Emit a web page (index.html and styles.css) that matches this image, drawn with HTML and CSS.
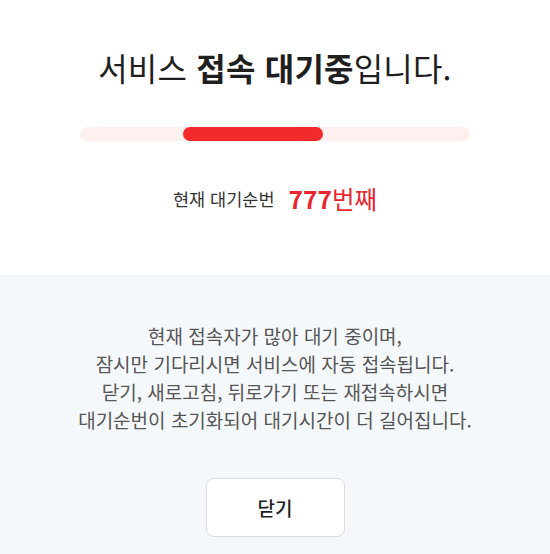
FILE: index.html
```html
<!DOCTYPE html>
<html lang="ko">
<head>
    <meta charset="UTF-8">
    <meta name="viewport" content="width=device-width, initial-scale=1.0">
    <title>서비스 접속 대기중</title>
    <link rel="stylesheet" href="styles.css">
</head>
<body>
    <div class="wait-top">
        <h1 class="wait-title">서비스 <strong>접속 대기중</strong>입니다.</h1>

        <div class="progress-track">
            <div class="progress-fill"></div>
        </div>

        <div class="queue">
            <span class="queue-label">현재 대기순번</span>
            <span class="queue-num"><b>777</b>번째</span>
        </div>
    </div>

    <div class="wait-bottom">
        <p class="notice">현재 접속자가 많아 대기 중이며,<br>잠시만 기다리시면 서비스에 자동 접속됩니다.</p>
        <p class="notice">닫기, 새로고침, 뒤로가기 또는 재접속하시면<br>대기순번이 초기화되어 대기시간이 더 길어집니다.</p>
        <button class="close-btn" type="button">닫기</button>
    </div>
</body>
</html>
```

FILE: styles.css
```css
body {
    margin: 0;
    font-family: "Noto Sans CJK KR", "Noto Sans", sans-serif;
    background: #fff;
    color: #222;
    text-align: center;
}
.wait-top {
    padding: 47px 0 60px;
}
.wait-title {
    margin: 0;
    font-size: 32px;
    line-height: 40px;
    font-weight: 400;
    letter-spacing: 0.2px;
    color: #1f1f1f;
}
.wait-title strong {
    font-weight: 700;
}
.progress-track {
    position: relative;
    height: 14px;
    margin: 40px 80px 0;
    background: #fff0f0;
    border-radius: 7px;
    overflow: hidden;
}
.progress-fill {
    position: absolute;
    top: 0;
    left: 26.3%;
    width: 36%;
    height: 100%;
    background: #f32a2a;
    border-radius: 7px;
}
.queue {
    margin-top: 40px;
    display: flex;
    justify-content: center;
    align-items: center;
    gap: 14px;
    height: 34px;
}
.queue-label {
    font-size: 17.5px;
    color: #333;
}
.queue-num {
    font-size: 24.5px;
    color: #e8262e;
}
.queue-num b {
    font-weight: 700;
}
.wait-bottom {
    background: #f5f8fa;
    padding: 47px 0 18px;
}
.notice {
    margin: 0;
    font-size: 19px;
    line-height: 28px;
    color: #555;
}
.close-btn {
    display: block;
    margin: 44px auto 0;
    width: 139px;
    height: 59px;
    background: #fff;
    border: 1px solid #dcdcdc;
    border-radius: 8px;
    font-family: inherit;
    font-size: 19px;
    font-weight: 500;
    color: #222;
}
```
